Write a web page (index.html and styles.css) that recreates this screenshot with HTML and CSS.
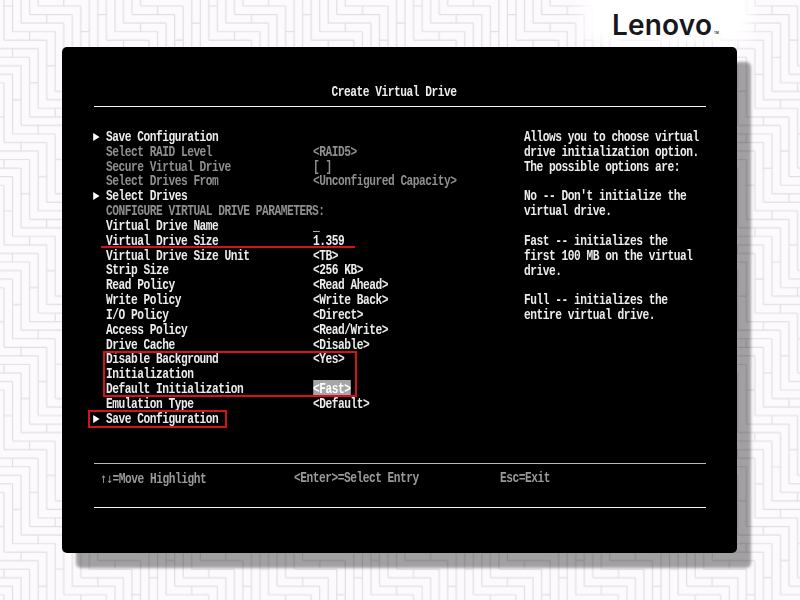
FILE: index.html
```html
<!DOCTYPE html>
<html lang="en">
<head>
<meta charset="utf-8">
<title>Create Virtual Drive</title>
<link rel="stylesheet" href="styles.css">
</head>
<body>
<div class="page">
  <svg class="pattern" width="800" height="600" aria-hidden="true">
    <defs>
      <pattern id="stairs" width="12" height="12" patternUnits="userSpaceOnUse" patternTransform="translate(4 6) scale(8.533)">
        <path class="line" d="M0 4h5M1 3h5M2 2h5M3 1h5M4 0h5M4 12h5M5 11h5M6 10h5M7 9h5M8 8h5M9 7h5M10 6h5M11 5h5M-4 8h5M-3 7h5M-2 6h5M-1 5h5
        M0 4v-7M0 16v-7M12 4v-7M12 16v-7M1 3v-7M1 15v-7M2 2v-7M2 14v-7M3 1v-7M3 13v-7M4 0v-7M4 12v-7M5 11v-7M6 10v-7M7 9v-7M8 8v-7M9 7v-7M10 6v-7M10 18v-7M11 5v-7M11 17v-7"/>
      </pattern>
      <pattern id="ticks" width="24" height="24" patternUnits="userSpaceOnUse" patternTransform="translate(4 6) scale(8.533)">
        <path class="line" d="M7 23v1M9 21v1M11 19v1M13 17v1M15 15v1M17 13v1M19 11v1M21 9v1M23 7v1M1 5v1M3 3v1M5 1v1
        M18 0v1M20 22v1M22 20v1M0 18v1M24 18v1M2 16v1M4 14v1M6 12v1M8 10v1M10 8v1M12 6v1M14 4v1M16 2v1
        M9 3h1M11 1h1M13 23h1M15 21h1M17 19h1M19 17h1M21 15h1M23 13h1M1 11h1M3 9h1M5 7h1M7 5h1
        M20 4h1M22 2h1M0 0h1M0 24h1M2 22h1M4 20h1M6 18h1M8 16h1M10 14h1M12 12h1M14 10h1M16 8h1M18 6h1"/>
      </pattern>
    </defs>
    <rect width="800" height="600" fill="url(#stairs)"/>
    <rect width="800" height="600" fill="url(#ticks)"/>
  </svg>
  <div class="logo-glow"></div>
  <div class="logo">Lenovo<span class="tm">TM</span></div>

  <main class="panel">
    <div class="screen">
      <h1 class="title">Create Virtual Drive</h1>
      <div class="body">
        <div class="form">
          <div class="row"><i class="arrow"></i><span class="label">Save Configuration</span><span></span></div>
          <div class="row off"><i></i><span class="label">Select RAID Level</span><span>&lt;RAID5&gt;</span></div>
          <div class="row off"><i></i><span class="label">Secure Virtual Drive</span><span>[ ]</span></div>
          <div class="row off"><i></i><span class="label">Select Drives From</span><span>&lt;Unconfigured Capacity&gt;</span></div>
          <div class="row"><i class="arrow"></i><span class="label">Select Drives</span><span></span></div>
          <div class="row off"><i></i><span class="label">CONFIGURE VIRTUAL DRIVE PARAMETERS:</span><span></span></div>
          <div class="row"><i></i><span class="label">Virtual Drive Name</span><span>_</span></div>
          <div class="row"><i></i><span class="label">Virtual Drive Size</span><span>1.359</span></div>
          <div class="row"><i></i><span class="label">Virtual Drive Size Unit</span><span>&lt;TB&gt;</span></div>
          <div class="row"><i></i><span class="label">Strip Size</span><span>&lt;256 KB&gt;</span></div>
          <div class="row"><i></i><span class="label">Read Policy</span><span>&lt;Read Ahead&gt;</span></div>
          <div class="row"><i></i><span class="label">Write Policy</span><span>&lt;Write Back&gt;</span></div>
          <div class="row"><i></i><span class="label">I/O Policy</span><span>&lt;Direct&gt;</span></div>
          <div class="row"><i></i><span class="label">Access Policy</span><span>&lt;Read/Write&gt;</span></div>
          <div class="row"><i></i><span class="label">Drive Cache</span><span>&lt;Disable&gt;</span></div>
          <div class="row"><i></i><span class="label">Disable Background</span><span>&lt;Yes&gt;</span></div>
          <div class="row"><i></i><span class="label">Initialization</span><span></span></div>
          <div class="row"><i></i><span class="label">Default Initialization</span><span><b class="selected">&lt;Fast&gt;</b></span></div>
          <div class="row"><i></i><span class="label">Emulation Type</span><span>&lt;Default&gt;</span></div>
          <div class="row"><i class="arrow"></i><span class="label">Save Configuration</span><span></span></div>
        </div>
        <div class="help">
          <p>Allows you to choose virtual<br>drive initialization option.<br>The possible options are:</p>
          <p>No -- Don't initialize the<br>virtual drive.</p>
          <p>Fast -- initializes the<br>first 100 MB on the virtual<br>drive.</p>
          <p>Full -- initializes the<br>entire virtual drive.</p>
        </div>
      </div>
      <footer class="footer">
        <span class="key-move"><span class="updown">↑↓</span>=Move Highlight</span>
        <span class="key-enter">&lt;Enter&gt;=Select Entry</span>
        <span>Esc=Exit</span>
      </footer>
    </div>
    <div class="mark mark-size"></div>
    <div class="mark mark-init"></div>
    <div class="mark mark-save"></div>
  </main>
</div>
</body>
</html>
```
FILE: styles.css
```css
* { box-sizing: border-box; }
html, body { margin: 0; padding: 0; }
body { background: #fdfafd; }
.page { position: relative; width: 800px; height: 600px; overflow: hidden; padding: 47px 0 0 62px; }
.pattern { position: absolute; left: 0; top: 0; }
.line { fill: none; stroke: #e2dee2; stroke-width: 0.14; }
.logo-glow { position: absolute; left: 583px; top: -25px; width: 168px; height: 68px; background: #fff; filter: blur(8px); }
.logo { position: absolute; left: 612px; top: 8px; font: 600 28px/34px "Inter", sans-serif; letter-spacing: 0.2px; color: #17171c; }
.tm { position: absolute; left: 102px; top: 23px; font-size: 3px; line-height: 4px; letter-spacing: 0; }
.panel { position: relative; width: 675px; height: 506px; background: #000; border-radius: 5px; box-shadow: 14px 15px 3px rgba(0, 0, 0, 0.36); padding: 0 0 0 32px; }
.screen { width: 765px; transform: scaleX(0.8); transform-origin: 0 0; font: bold 14px/14.84px "Liberation Mono", monospace; letter-spacing: -0.6px; color: #ececec; }
.title { margin: 0; padding: 38px 15px 0 0; height: 60px; border-bottom: 1px solid #f4f4f4; font: inherit; letter-spacing: inherit; text-align: center; }
.body { display: flex; padding-top: 23px; height: 357px; border-bottom: 1px solid #bbb; }
.form { width: 537.5px; flex: none; }
.row { display: grid; grid-template-columns: 15px 258.75px 1fr; height: 14.84px; white-space: nowrap; }
.off { color: #8f8f8f; }
.arrow { display: block; width: 0; height: 0; margin: 3px 0 0 -1px; border-left: 8px solid #fff; border-top: 4px solid transparent; border-bottom: 4px solid transparent; }
.selected { background: #a6a6a6; color: #fff; font-weight: inherit; padding: 1px 0 0; }
.help { white-space: nowrap; }
.help p { margin: 0 0 14.84px; }
.footer { display: flex; height: 44px; padding: 7px 0 0 7.5px; border-bottom: 1px solid #f4f4f4; color: #9a9a9a; }
.updown { font-family: "DejaVu Sans Mono", monospace; font-weight: normal; }
.key-move { width: 242.5px; }
.key-enter { width: 257.5px; }
.mark { position: absolute; border: 2px solid #d3121f; }
.mark-size { left: 39px; top: 199px; width: 254px; height: 2px; border-width: 2px 0 0; }
.mark-init { left: 41px; top: 304px; width: 254px; height: 46px; }
.mark-save { left: 26px; top: 363px; width: 139px; height: 18px; }
```
